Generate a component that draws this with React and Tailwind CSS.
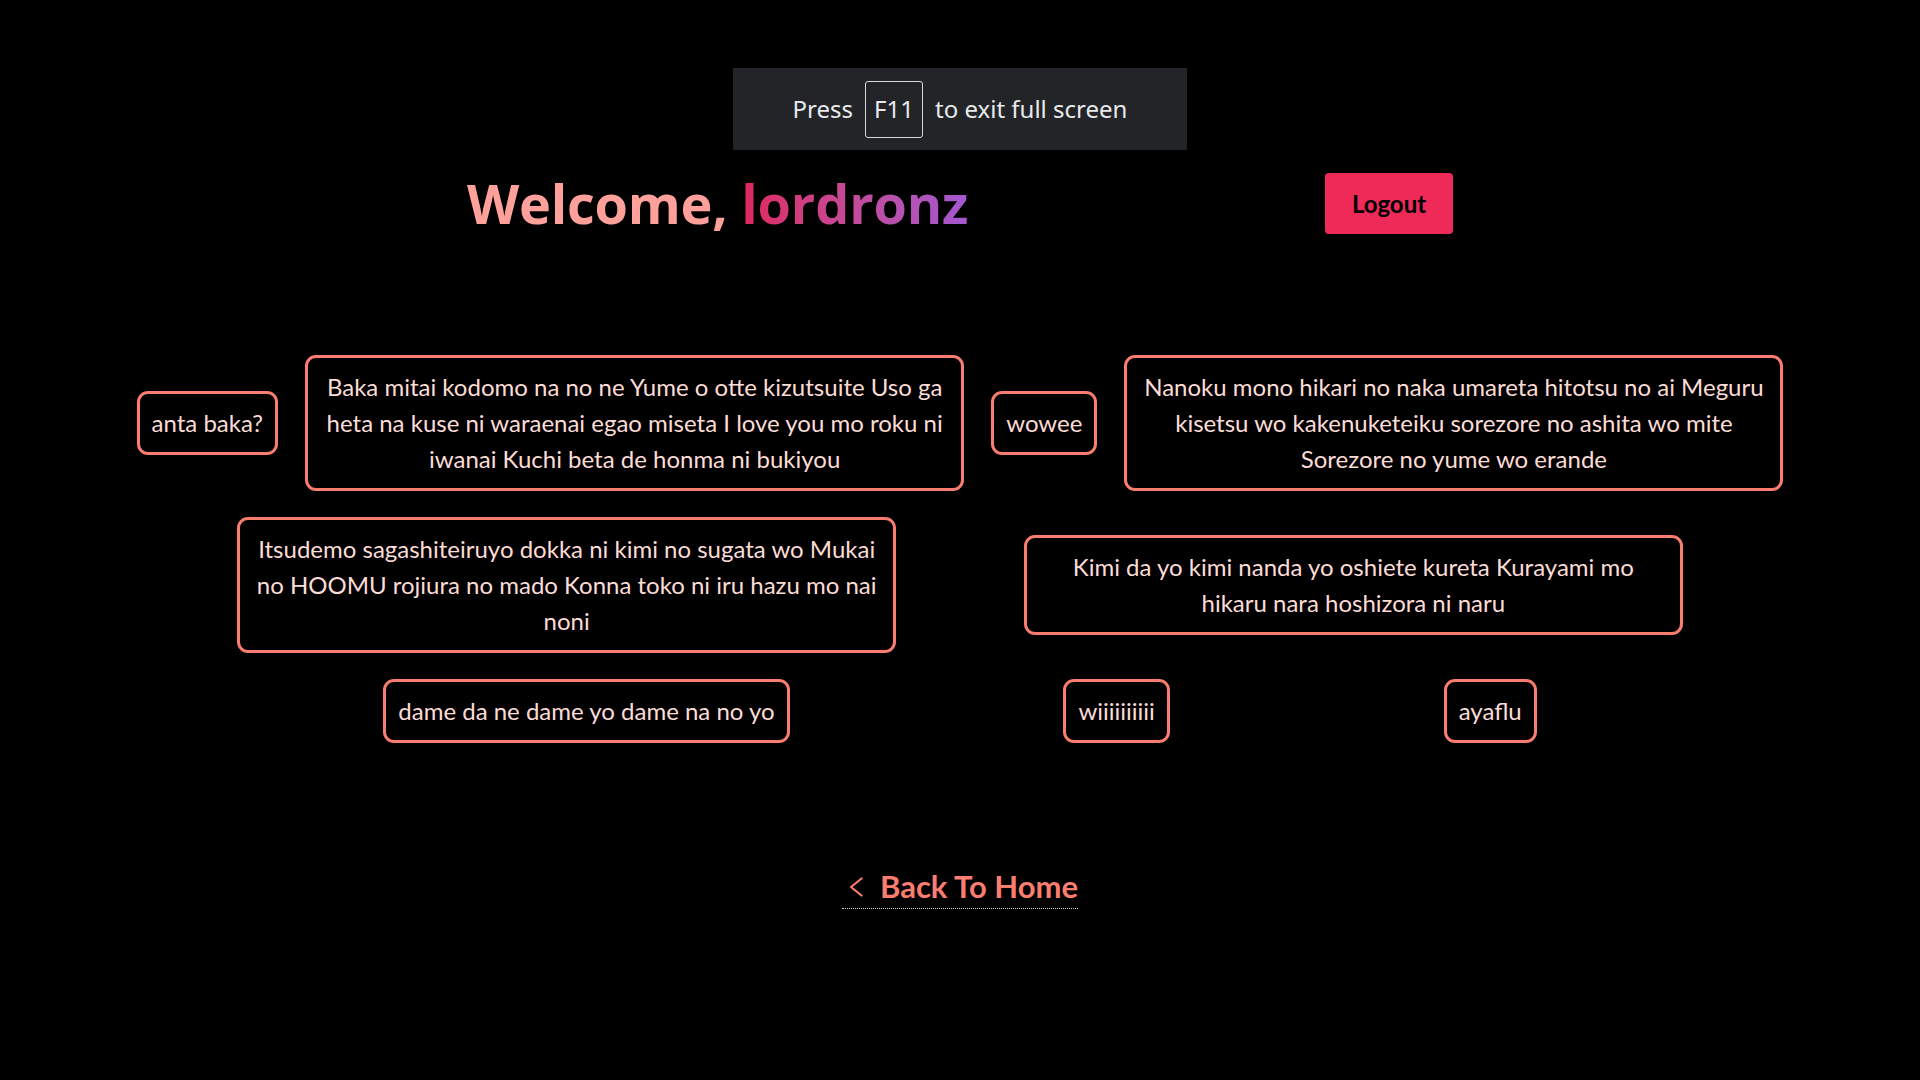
import React from 'react';

const lines = [
  'anta baka?',
  'Baka mitai kodomo na no ne Yume o otte kizutsuite Uso ga heta na kuse ni waraenai egao miseta I love you mo roku ni iwanai Kuchi beta de honma ni bukiyou',
  'wowee',
  'Nanoku mono hikari no naka umareta hitotsu no ai Meguru kisetsu wo kakenuketeiku sorezore no ashita wo mite Sorezore no yume wo erande',
  'Itsudemo sagashiteiruyo dokka ni kimi no sugata wo Mukai no HOOMU rojiura no mado Konna toko ni iru hazu mo nai noni',
  'Kimi da yo kimi nanda yo oshiete kureta Kurayami mo hikaru nara hoshizora ni naru',
  'dame da ne dame yo dame na no yo',
  'wiiiiiiiiii',
  'ayaflu',
];

const FullscreenHint = () => (
  <div
    className="flex items-center justify-center w-[454px] h-[82px] bg-[#222427] text-[#e8eaed] text-[24px]"
    style={{ fontFamily: '"Noto Sans", "Open Sans", sans-serif' }}
  >
    <span>Press</span>
    <span className="mx-[12px] flex items-center justify-center w-[58px] h-[57px] border border-[#d8d8d8] rounded-[3px]">
      F11
    </span>
    <span>to exit full screen</span>
  </div>
);

const QuoteCard = ({ text }) => (
  <div className="mx-[13.5px] my-[13px] max-w-[659px] border-[3px] border-[#fa7d70] rounded-[11px] px-3 py-[11px] text-center text-[24px] leading-9 text-[#fcdcd6]">
    {text}
  </div>
);

export default function App() {
  return (
    <div
      className="min-h-screen w-full bg-black flex flex-col items-center pt-[68px]"
      style={{ fontFamily: 'Lato, "Noto Sans", sans-serif' }}
    >
      <FullscreenHint />

      <div className="mt-[23px] w-[986px] flex items-center justify-between">
        <h1
          className="text-[54px] font-bold leading-none tracking-[-0.2px] -mt-[2px]"
          style={{ fontFamily: '"Open Sans", "Noto Sans", sans-serif' }}
        >
          <span className="text-[#ffa09b]">Welcome, </span>
          <span className="bg-gradient-to-r from-[#e0245e] to-[#a457d0] bg-clip-text text-transparent">
            lordronz
          </span>
        </h1>
        <button className="w-[128px] h-[61px] rounded-[4px] bg-[#ef2a58] text-black text-[24px] font-bold">
          Logout
        </button>
      </div>

      <div className="mt-[108px] w-full px-[123px] flex flex-wrap justify-evenly items-center">
        {lines.map((t, i) => (
          <QuoteCard key={i} text={t} />
        ))}
      </div>

      <a
        href="#"
        className="mt-[115px] inline-flex items-center gap-[17px] pl-[7px] pb-[6px] border-b border-dotted border-[#cfcfcf] text-[#fa7d70] text-[31px] font-bold leading-none"
      >
        <svg width="14" height="20" viewBox="0 0 14 20" fill="none" stroke="currentColor" strokeWidth="2.2" strokeLinecap="round" strokeLinejoin="round">
          <path d="M12.5 1.5 L2 10 L12.5 18.5" />
        </svg>
        <span>Back To Home</span>
      </a>
    </div>
  );
}
